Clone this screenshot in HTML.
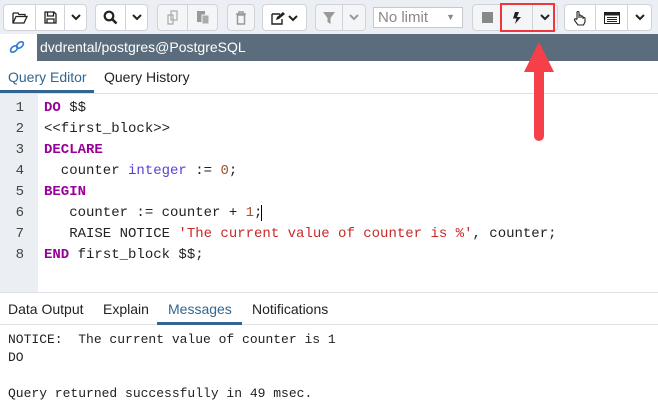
<!DOCTYPE html>
<html><head><style>
*{margin:0;padding:0;box-sizing:border-box}
body{width:658px;height:411px;overflow:hidden;background:#fff;font-family:"Liberation Sans",sans-serif;position:relative}
.tb{position:absolute;left:0;top:0;width:658px;height:34px;background:#ebeef3}
.g{position:absolute;top:4px;height:27px;border:1px solid #d0d4da;border-radius:4px;background:#fff;display:flex}
.g.dis{background:#f4f5f7}
.b{height:100%;border-right:1px solid #d0d4da;display:flex;align-items:center;justify-content:center;color:#222;font-size:13px}
.b:last-child{border-right:none}
.hdr{position:absolute;top:34px;left:37px;width:621px;height:27px;background:#5b6d7c;color:#fff;font-size:14px;line-height:27px;padding-left:3px}
.tabs{position:absolute;top:61px;left:0;width:658px;height:33px;border-bottom:1px solid #dde0e5;font-size:14px}
.tab{position:absolute;top:8px}
.gut{position:absolute;top:94px;left:0;width:38px;height:198px;background:#ebeef3}
.code{position:absolute;left:0;top:98px;font-family:"Liberation Mono",monospace;font-size:14px;line-height:21px;white-space:pre;color:#222}
.ln{display:inline-block;width:24px;text-align:right;color:#444;margin-right:20px}
.k{color:#990099;font-weight:bold}.t{color:#5e3fd6}.n{color:#a0522d}.s{color:#c82828}
.bt{position:absolute;top:292px;left:0;width:658px;height:33px;border-top:1px solid #dde0e5;border-bottom:1px solid #dde0e5;font-size:14px;color:#222}
.msg{position:absolute;top:331px;left:8px;font-family:"Liberation Mono",monospace;font-size:13px;line-height:18px;white-space:pre;color:#222}
</style></head><body>
<div class="tb">
 <div class="g" style="left:3px;width:84px"><div class="b" style="width:32px"><svg width="16" height="13" viewBox="0 0 16 13"><path d="M1 2h5l1 1.5h6v2M1 2v10h11l3-6.5H4L1 12" fill="none" stroke="#222" stroke-width="1.3"/></svg></div><div class="b" style="width:29px"><svg width="13" height="13" viewBox="0 0 13 13"><path d="M1 1h9l2 2v9H1z M3.5 1v4h6V1 M3 8h7v4H3z" fill="none" stroke="#222" stroke-width="1.3"/></svg></div><div class="b" style="flex:1"><svg width="10" height="7"><path d="M1 1l4 4 4-4" fill="none" stroke="#222" stroke-width="2"/></svg></div></div>
 <div class="g" style="left:95px;width:53px"><div class="b" style="width:30px"><svg width="15" height="15"><circle cx="6" cy="6" r="4.3" fill="none" stroke="#222" stroke-width="2.2"/><path d="M9 9l4.5 4.5" stroke="#222" stroke-width="2.6"/></svg></div><div class="b" style="flex:1"><svg width="10" height="7"><path d="M1 1l4 4 4-4" fill="none" stroke="#222" stroke-width="2"/></svg></div></div>
 <div class="g dis" style="left:157px;width:61px"><div class="b" style="width:30px"><svg width="14" height="15"><path d="M5 1h6v9H5z M2 5h5v9H2z" fill="none" stroke="#aaa" stroke-width="1.2"/></svg></div><div class="b" style="flex:1"><svg width="14" height="15"><path d="M1 1h8v11H1z" fill="#999"/><path d="M6 5h7v9H6z" fill="#aaa" stroke="#f4f5f7"/></svg></div></div>
 <div class="g dis" style="left:227px;width:28px"><div class="b" style="flex:1"><svg width="12" height="14"><path d="M1 3h10M4 3V1h4v2M2.5 4h7v9h-7z" fill="none" stroke="#999" stroke-width="1.5"/></svg></div></div>
 <div class="g" style="left:262px;width:45px"><div class="b" style="flex:1"><svg width="28" height="14"><path d="M1 3h8M1 3v10h10V8" fill="none" stroke="#222" stroke-width="1.4"/><path d="M5 9l1-3 6-5 2 2-6 5z" fill="#222"/><path d="M18 5l4 4 4-4" fill="none" stroke="#222" stroke-width="2"/></svg></div></div>
 <div class="g dis" style="left:315px;width:51px"><div class="b" style="width:27px"><svg width="14" height="14"><path d="M1 1h12L8.5 7v6l-3-2V7z" fill="#999"/></svg></div><div class="b" style="flex:1"><svg width="10" height="7"><path d="M1 1l4 4 4-4" fill="none" stroke="#999" stroke-width="2"/></svg></div></div>
 <div style="position:absolute;left:373px;top:7px;width:90px;height:21px;border:1px solid #c5c9cf;background:#fff;font-size:15px;color:#888;padding-left:4px;line-height:19px">No limit<span style="position:absolute;right:7px;top:0;font-size:9px">▼</span></div>
 <div class="g dis" style="left:472px;width:86px"><div class="b" style="width:29px"><div style="width:11px;height:11px;background:#888"></div></div><div class="b" style="width:31px"><svg width="10" height="14"><path d="M3 1h4L5 6h4L3 13l1.5-5.5H1z" fill="#222"/></svg></div><div class="b" style="flex:1"><svg width="10" height="7"><path d="M1 1l4 4 4-4" fill="none" stroke="#222" stroke-width="2"/></svg></div></div>
 <div class="g" style="left:564px;width:88px"><div class="b" style="width:31px"><svg width="14" height="16"><path d="M4 9V2.5a1 1 0 0 1 2 0V8V6a1 1 0 0 1 2 0v2-1a1 1 0 0 1 2 0v2-.5a1 1 0 0 1 2 0V12l-1.5 3H5L2 11l-.5-1a1 1 0 0 1 1.8-.8z" fill="none" stroke="#222" stroke-width="1.1"/></svg></div><div class="b" style="width:32px"><svg width="16" height="12"><rect x=".5" y=".5" width="15" height="11" fill="none" stroke="#222"/><rect x="1" y="1" width="14" height="2.5" fill="#222"/><path d="M3 5.5h10M3 7.5h10M3 9.5h10" stroke="#222"/></svg></div><div class="b" style="flex:1"><svg width="10" height="7"><path d="M1 1l4 4 4-4" fill="none" stroke="#222" stroke-width="2"/></svg></div></div>
 <div style="position:absolute;left:500px;top:3px;width:55px;height:29px;border:2px solid #f0363c"></div>
</div>
<svg style="position:absolute;left:9px;top:40px" width="16" height="14"><g fill="none" stroke="#2f7bd1" stroke-width="1.6"><ellipse cx="5" cy="9" rx="4" ry="2.5" transform="rotate(-40 5 9)"/><ellipse cx="11" cy="5" rx="4" ry="2.5" transform="rotate(-40 11 5)"/></g></svg>
<div class="hdr">dvdrental/postgres@PostgreSQL</div>
<div class="tabs">
 <div class="tab" style="left:8px;color:#326690">Query Editor</div>
 <div style="position:absolute;left:0;top:29px;width:94px;height:3px;background:#326690"></div>
 <div class="tab" style="left:104px;color:#222">Query History</div>
</div>
<div class="gut"></div>
<div class="code"><span class="ln">1</span><span class="k">DO</span> $$
<span class="ln">2</span>&lt;&lt;first_block&gt;&gt;
<span class="ln">3</span><span class="k">DECLARE</span>
<span class="ln">4</span>  counter <span class="t">integer</span> := <span class="n">0</span>;
<span class="ln">5</span><span class="k">BEGIN</span>
<span class="ln">6</span>   counter := counter + <span class="n">1</span>;<span style="border-left:1px solid #000;margin-left:-1px"> </span>
<span class="ln">7</span>   RAISE NOTICE <span class="s">'The current value of counter is %'</span>, counter;
<span class="ln">8</span><span class="k">END</span> first_block $$;</div>
<div class="bt">
 <div class="tab" style="left:8px">Data Output</div>
 <div class="tab" style="left:103px">Explain</div>
 <div class="tab" style="left:168px;color:#326690">Messages</div>
 <div style="position:absolute;left:157px;top:29px;width:85px;height:3px;background:#326690"></div>
 <div class="tab" style="left:252px">Notifications</div>
</div>
<div class="msg">NOTICE:  The current value of counter is 1
DO

Query returned successfully in 49 msec.</div>
<svg style="position:absolute;left:0;top:0" width="658" height="411"><path d="M539 42L554 72H544V136a5 5 0 0 1-10 0V72H524z" fill="#f5404a"/></svg>
</body></html>
